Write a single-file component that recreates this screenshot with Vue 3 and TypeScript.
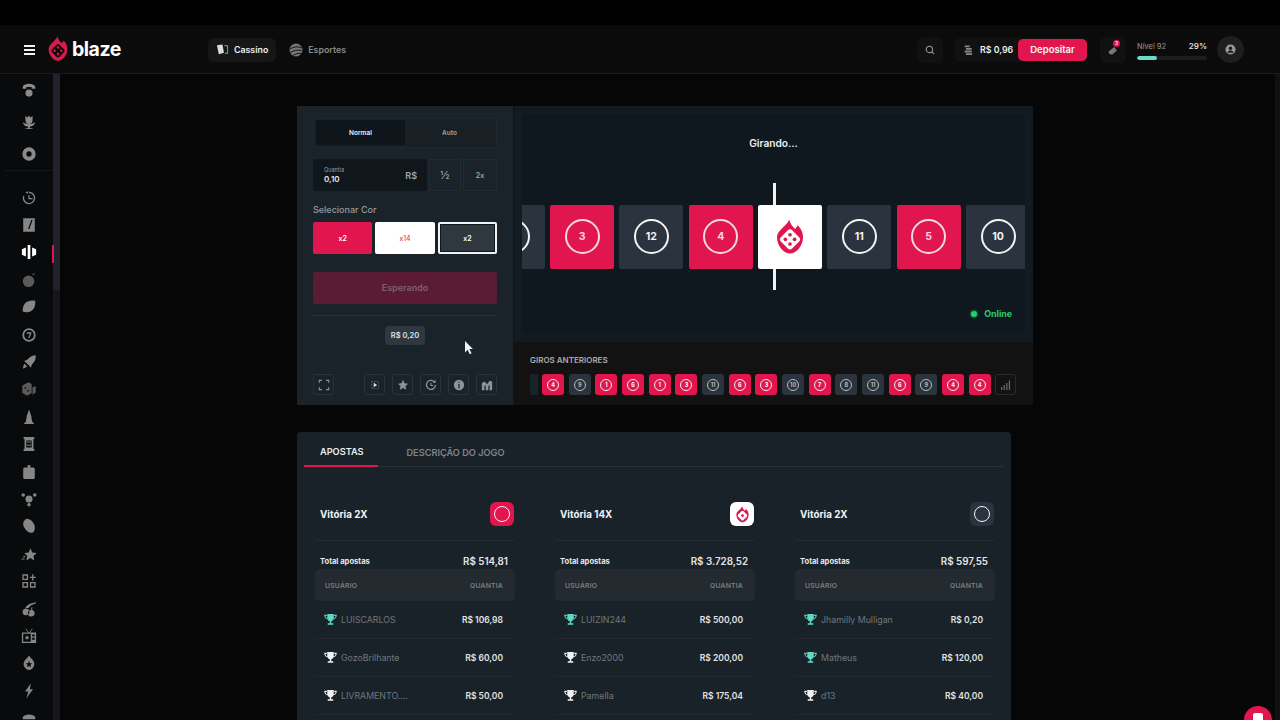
<script setup lang="ts">
const railIcons: string[] = [
  'M2 5c2-4 12-4 14 0v2.500h-4V5.500H6v2H2zM9 8.500a4 4 0 1 1 0 8 4 4 0 0 1 0-8z',
  'M5 2l2 2 2-2 2 2 2-2v5a4 4 0 0 1-8 0zM2 9c1 4 3 5 6 5v2H5v1h8v-1h-3v-2c3 0 5-1 6-5-1 1-3 2-4 2H6c-1 0-3-1-4-2z',
  'M9 1.500a7.500 7.500 0 1 1 0 15 7.500 7.500 0 0 1 0-15zm0 4.500a3 3 0 1 0 0 6 3 3 0 0 0 0-6z',
  'M9 2a7 7 0 1 1-6.500 4.500l1.400.5A5.500 5.500 0 1 0 9 3.500V2zM8.300 5.500h1.400V9H13v1.400H8.300zM5 2.500l3-1v3z',
  'M2.500 1.500h13v15h-13zM11.500 3.500L8 13.500h1.500L13 3.500z',
  'M7.500 1h3v16h-3zM5.500 4v10L1 12V6zM12.500 4l4.500 2v6l-4.500 2z',
  'M8.500 4a6.500 6.500 0 1 1 0 13 6.500 6.500 0 0 1 0-13zM12.500 3l2-2 1 1-2 2z',
  'M16 2c.5 5-1 11-7 12.500-2.500.6-5 .6-7-.5-.5-4 1-9 5-11 3-1.300 6-1.500 9-1z',
  'M9 1.500a7.500 7.500 0 1 1 0 15 7.500 7.500 0 0 1 0-15zm0 2a5.500 5.500 0 1 0 0 11 5.500 5.500 0 0 0 0-11zM6.500 6h5v1.500L9.500 12.500H8l2-5H6.500z',
  'M16.500 1.500c.5 4-1 7.500-4 10L11 15.500l-2-2.500-3-3-2.500-2 3.500-1.500c3-3.500 6.500-5 9.500-5zM4 11l3 3-4.500 2.500c-.5-2 .5-4 1.500-5.500z',
  'M1.500 5l7-3.500 3.500 2v10l-5 3-5.500-3zM4 7v1.700h1.700V7zM7 10v1.700h1.700V10zM13 7l3.500-1v7l-3.500 2.500z',
  'M9 .5l2.500 7.500 1 6 2.500 3H3l2.500-3 1-6z',
  'M3 1h12v2.500h-1v11h1V17H3v-2.500h1v-11H3zM6 5v8h6V5zM7 6h1.500v1.700H7zM9.500 6H11v1.700H9.500zM7 9.500h1.500v1.700H7zM9.500 9.500H11v1.700H9.500z',
  'M7.500 1h3v3h3.500l1.500 1v11l-1 1h-11l-1-1V5L4 4h3.500z',
  'M9 5a4 4 0 1 1 0 8 4 4 0 0 1 0-8zM2.500 2.500a2 2 0 1 1 0 4 2 2 0 0 1 0-4zM15.500 2.500a2 2 0 1 1 0 4 2 2 0 0 1 0-4zM9 13.500a2 2 0 1 1 0 4 2 2 0 0 1 0-4z',
  'M6 1c3-.5 7 2 9 6.500 1.200 3.500.5 7.500-2 9-3 1-7.500-1.500-9.500-6C1.500 7 2.500 2.500 6 1z',
  'M10.500 2.500l2.200 4.800 5 .6-3.700 3.300 1 5-4.500-2.700-4.500 2.700 1-5L3.800 7.900l5-.6zM.5 14h3.500v1.300H.5zM2.500 11.300h2.200v1.300H2.500z',
  'M1.500 1.500h6.500v6.500H1.500zM3 3v3.500h3.500V3zM1.500 10h6.500v6.500H1.500zM3 11.500V15h3.500v-3.500zM10 10h6.500v6.500H10zM11.500 11.500V15H15v-3.500zM12.500 1.500H14v2.700h2.500v1.500H14v2.800h-1.500V5.700H10V4.200h2.500z',
  'M5 8.500a3.800 3.800 0 1 1 0 7.500 3.800 3.800 0 0 1 0-7.500zM11 10a3.800 3.800 0 1 1 0 7.500 3.800 3.800 0 0 1 0-7.500zM5 8c1-3 5-5.500 11.500-6.500l.5 1c-4 1-7.500 3.500-8.500 5.500zM11 10l1-3 1 .5-1 3z',
  'M1 5h16v12H1zM2.500 6.500v9H11v-9zM12.500 7.200v2.300H15.500V7.200zM12.500 11v2.300H15.500V11zM5.500.5l3.500 4.500h-1L5 1zM12.500.5L9.500 5h1L13 1zM6.800 8l.8 1.800 1.900.2-1.400 1.300.4 1.900-1.700-1-1.700 1 .4-1.900L4.100 10l1.900-.2z',
  'M9 .5c1 2 2 2.500 3.500 4.200 3 3 3 6.300 1.500 8.800-1.200 2-3 3.500-5 3.500s-3.800-1.500-5-3.500c-1.500-2.500-1.500-5.800 1.500-8.800C6.900 3 8 2.500 9 .5zM9 6.500l-1 2.700-2.700.2 2.100 1.700-.7 2.600L9 12.300l2.300 1.400-.7-2.600 2.100-1.700-2.700-.2z',
  'M11 .5L4.500 9.500h3.800L6 17.500l7.500-10.500H10z',
  'M2 8c2-4 12-4 14 0v2H2zM2 11h14v5H2z'
]

const reel = [
  { t: 'dark', n: '' }, { t: 'red', n: '3' }, { t: 'dark', n: '12' }, { t: 'red', n: '4' },
  { t: 'white', n: '' }, { t: 'dark', n: '11' }, { t: 'red', n: '5' }, { t: 'dark', n: '10' }
]

const history: [string, string][] = [
  ['red', '4'], ['dark', '9'], ['red', '1'], ['red', '6'], ['red', '1'], ['red', '3'],
  ['dark', '11'], ['red', '6'], ['red', '3'], ['dark', '10'], ['red', '7'], ['dark', '8'],
  ['dark', '11'], ['red', '6'], ['dark', '9'], ['red', '4'], ['red', '4']
]

const columns = [
  {
    title: 'Vitória 2X', kind: 'red', total: 'R$ 514,81',
    rows: [['LUISCARLOS', 'R$ 106,98', 'teal'], ['GozoBrilhante', 'R$ 60,00', 'white'], ['LIVRAMENTO....', 'R$ 50,00', 'white']]
  },
  {
    title: 'Vitória 14X', kind: 'white', total: 'R$ 3.728,52',
    rows: [['LUIZIN244', 'R$ 500,00', 'teal'], ['Enzo2000', 'R$ 200,00', 'white'], ['Pamella', 'R$ 175,04', 'white']]
  },
  {
    title: 'Vitória 2X', kind: 'dark', total: 'R$ 597,55',
    rows: [['Jhamilly Mulligan', 'R$ 0,20', 'teal'], ['Matheus', 'R$ 120,00', 'teal'], ['d13', 'R$ 40,00', 'white']]
  }
]

const flame = 'M11.500 1c.8 3 2.500 5 4 6l1.500-2.500c2 2 3.500 4.500 3.500 8 0 5.500-4.500 10.500-8.500 10.500S3.500 18 3.500 12.500C3.500 8 9 6 11.500 1z'
</script>

<template>
  <div class="page">
    <div class="strip"></div>
    <header class="topbar">
      <div class="burger"><i></i><i></i><i></i></div>
      <div class="logo">
        <svg class="logo-mark" viewBox="3 .5 18 23.500">
          <path :d="flame" fill="#d81a4c" />
          <rect x="7.200" y="9" width="9.600" height="9.600" rx="2" transform="rotate(45 12 13.800)" fill="#14070b" />
          <circle cx="12" cy="10.800" r="1.100" fill="#d81a4c" /><circle cx="9" cy="13.800" r="1.100" fill="#d81a4c" />
          <circle cx="15" cy="13.800" r="1.100" fill="#d81a4c" /><circle cx="12" cy="16.800" r="1.100" fill="#d81a4c" />
        </svg>
        <span>blaze</span>
      </div>
      <nav class="nav">
        <div class="nav-item active">
          <svg viewBox="0 0 14 14" class="nav-icon"><path d="M1 2.500l6-1 1.500 9-5.500 1.500z" fill="#ddd" /><path d="M9 2.500h4v9H9.500v-1H12v-7H9z" fill="#999" /></svg>
          Cassino
        </div>
        <div class="nav-item">
          <svg viewBox="0 0 14 14" class="nav-icon big"><circle cx="7" cy="7" r="6.500" fill="#777" /><path d="M1 6c3-2 8-3 12-1M1.500 9.500c3-2 7-3 11-2M4 12.500c2-1.500 5-2.500 8-2" stroke="#111" stroke-width="1" fill="none" /></svg>
          Esportes
        </div>
      </nav>
      <div class="top-right">
        <div class="icon-box">
          <svg viewBox="0 0 12 12" class="search"><circle cx="5.300" cy="5.300" r="3.800" fill="none" stroke="#999" stroke-width="1.300" /><path d="M8.200 8.200l2.800 2.800" stroke="#999" stroke-width="1.300" /></svg>
        </div>
        <div class="wallet">
          <svg viewBox="0 0 12 14" class="coins"><path d="M2 1.500h6v2.200H2zM3.500 4.600h7v2.200h-7zM2 7.700h8.500v2.200H2zM3.500 10.800h7.500V13H3.500z" fill="#888" /></svg>
          <span class="balance">R$ 0,96</span>
          <button class="deposit">Depositar</button>
        </div>
        <div class="icon-box bell">
          <svg viewBox="0 0 14 14" class="bell-icon"><path d="M2 8.500L8.500 3.500l3 4-5.500 5-3.500-1z" fill="#777" /></svg>
          <span class="badge">3</span>
        </div>
        <div class="level">
          <div class="level-text"><span class="lv">Nível 92</span><span class="pc">29%</span></div>
          <div class="track"><div class="fill" :style="{ width: '29%' }"></div></div>
        </div>
        <div class="avatar">
          <svg viewBox="0 0 12 12"><circle cx="6" cy="6" r="5.500" fill="#999" /><circle cx="6" cy="4.600" r="1.900" fill="#1d1d1d" /><path d="M2.500 9.500c.8-2 2-2.400 3.500-2.400s2.700.4 3.500 2.400z" fill="#1d1d1d" /></svg>
        </div>
      </div>
    </header>

    <div class="body">
      <aside class="side">
        <div class="side-top">
          <svg v-for="i in [0, 1, 2]" :key="i" viewBox="0 0 18 18" class="s-icon"><path :d="railIcons[i]" fill="#8b8b8b" fill-rule="evenodd" /></svg>
        </div>
        <div class="side-rest">
          <svg
            v-for="(d, i) in railIcons.slice(3)"
            :key="i"
            viewBox="0 0 18 18"
            class="s-icon"
          ><path :d="d" :fill="i === 2 ? '#fff' : i === 3 || i === 7 ? '#5a5a5a' : '#868686'" fill-rule="evenodd" /></svg>
        </div>
      </aside>
      <div class="rail"><span class="rail-thumb"></span><span class="rail-mark"></span></div>

      <main class="content">
        <section class="game">
          <div class="controls">
            <div class="tabs">
              <div class="tab on">Normal</div>
              <div class="tab">Auto</div>
            </div>
            <div class="amount-row">
              <div class="amount">
                <div><div class="amt-label">Quantia</div><div class="amt-value">0,10</div></div>
                <span class="amt-cur">R$</span>
              </div>
              <div class="mini">½</div>
              <div class="mini wide">2x</div>
            </div>
            <div class="pick-label">Selecionar Cor</div>
            <div class="picks">
              <div class="pick p-red">x2</div>
              <div class="pick p-white">x14</div>
              <div class="pick p-dark">x2</div>
            </div>
            <button class="wait">Esperando</button>
            <div class="hr"></div>
            <div class="chip-wrap"><span class="chip">R$ 0,20</span></div>
            <div class="tools">
              <div class="tool">
                <svg viewBox="0 0 14 14"><path d="M1.500 4.500v-3h3M9.500 1.500h3v3M12.500 9.500v3h-3M4.500 12.500h-3v-3" fill="none" stroke="#8d9499" stroke-width="1.400" /></svg>
              </div>
              <div class="tools-right">
                <div class="tool">
                  <svg viewBox="0 0 14 14"><path d="M3 3h8v8H3z" fill="none" stroke="#555d63" stroke-dasharray="2 1" /><path d="M5.500 4.500l4 2.500-4 2.500z" fill="#ddd" /></svg>
                </div>
                <div class="tool">
                  <svg viewBox="0 0 14 14"><path d="M7 1l1.800 3.900 4.200.5-3.100 2.900.8 4.200L7 10.400l-3.700 2.100.8-4.200L1 5.400l4.200-.5z" fill="#8d9499" /></svg>
                </div>
                <div class="tool">
                  <svg viewBox="0 0 14 14"><path d="M11.500 4A5.300 5.300 0 1 0 12.300 7" fill="none" stroke="#8d9499" stroke-width="1.500" /><path d="M9 4.500h3.500V1z" fill="#8d9499" /><path d="M7 4.500V7.500h2.500" fill="none" stroke="#8d9499" stroke-width="1.200" /></svg>
                </div>
                <div class="tool">
                  <svg viewBox="0 0 14 14"><circle cx="7" cy="7" r="6" fill="#8d9499" /><path d="M6.300 3h1.400v1.400H6.300zM6.300 5.800h1.400V11H6.300z" fill="#1b242b" /></svg>
                </div>
                <div class="tool">
                  <svg viewBox="0 0 14 14"><path d="M1 13V5l3-2 3 3 3-4 3 1v10h-3V7L8.500 8.500V13h-3V8L4 7.500V13z" fill="#8d9499" /></svg>
                </div>
              </div>
            </div>
          </div>

          <div class="stage">
            <div class="canvas">
              <div class="status">Girando...</div>
              <div class="reel-zone">
                <span class="needle"></span>
                <div class="reel">
                  <div v-for="(c, i) in reel" :key="i" class="tile" :class="'t-' + c.t">
                    <svg v-if="c.t === 'white'" viewBox="3 .5 18 23.500" class="tile-logo">
                      <path :d="flame" fill="#e2164f" />
                      <rect x="6.800" y="8.600" width="10.400" height="10.400" rx="2" transform="rotate(45 12 13.800)" fill="#fff" />
                      <circle cx="12" cy="10.800" r="1.200" fill="#e2164f" /><circle cx="9" cy="13.800" r="1.200" fill="#e2164f" />
                      <circle cx="15" cy="13.800" r="1.200" fill="#e2164f" /><circle cx="12" cy="16.800" r="1.200" fill="#e2164f" />
                    </svg>
                    <span v-else class="ring">{{ c.n }}</span>
                  </div>
                </div>
              </div>
              <div class="online"><i></i>Online</div>
            </div>
            <div class="previous">
              <div class="prev-title">GIROS ANTERIORES</div>
              <div class="prev-row">
                <span class="prev-edge"></span>
                <div v-for="(h, i) in history" :key="i" class="hist" :class="'h-' + h[0]"><span>{{ h[1] }}</span></div>
                <div class="stats">
                  <svg viewBox="0 0 12 12"><path d="M1 8h1.300v3H1zM3.600 6h1.300v5H3.600zM6.200 4h1.300v7H6.200zM8.800 1.500h1.300V11H8.800z" fill="#666" /></svg>
                </div>
              </div>
            </div>
          </div>
        </section>

        <section class="bets">
          <div class="bet-tabs">
            <div class="bet-tab on">APOSTAS</div>
            <div class="bet-tab">DESCRIÇÃO DO JOGO</div>
          </div>
          <div class="cols">
            <div v-for="(col, i) in columns" :key="i" class="col">
              <div class="col-head">
                <span class="col-title">{{ col.title }}</span>
                <span class="col-badge" :class="'b-' + col.kind">
                  <svg v-if="col.kind === 'white'" viewBox="3 .5 18 23.500" class="badge-logo">
                    <path :d="flame" fill="#e2164f" />
                    <rect x="6.800" y="8.600" width="10.400" height="10.400" rx="2" transform="rotate(45 12 13.800)" fill="#fff" />
                    <circle cx="12" cy="13.800" r="2" fill="#e2164f" />
                  </svg>
                  <i v-else></i>
                </span>
              </div>
              <div class="col-total"><span class="tl">Total apostas</span><span class="tv">{{ col.total }}</span></div>
              <div class="thead"><span>USUÁRIO</span><span>QUANTIA</span></div>
              <div v-for="(r, j) in col.rows" :key="j" class="row">
                <span class="who">
                  <svg viewBox="0 0 14 14" class="cup">
                    <path d="M3.500 1h7v4.500c0 2-1.500 3.300-2.700 3.500v2H10v1.700H4V11h2.200V9C5 8.800 3.500 7.500 3.500 5.500zM3 2v1.200H1.500c.1 1.300.8 2.200 1.900 2.500l.4 1.100C1.700 6.500.3 5 .2 2zM11 2h2.800c-.1 3-1.500 4.500-3.600 4.800l.4-1.100c1.100-.3 1.800-1.200 1.900-2.500H11z" :fill="r[2] === 'teal' ? '#5fd8c6' : '#f2f2f2'" />
                  </svg>
                  <span class="name">{{ r[0] }}</span>
                </span>
                <span class="money">{{ r[1] }}</span>
              </div>
            </div>
          </div>
        </section>
      </main>
      <div class="right-rail"></div>
    </div>

    <svg class="cursor" viewBox="0 0 10 16"><path d="M1 0v13l3-3 2.500 5 2-1-2.500-4.800H10z" fill="#f4f4f4" /></svg>
    <div class="chat"><span></span></div>
  </div>
</template>

<style>
html, body { margin: 0; background: #060606; overflow: hidden; }
</style>

<style scoped>
* { box-sizing: border-box; }
.page { position: relative; width: 1280px; height: 720px; overflow: hidden; background: #060606; color: #fff; font-family: Inter, "Liberation Sans", sans-serif; }
.strip { height: 25px; background: #000; }
.topbar { height: 49px; display: flex; align-items: center; background: #0b0b0c; border-bottom: 1px solid #1b1b1d; padding: 1px 0 0 24px; }
.burger { width: 11px; display: flex; flex-direction: column; gap: 2.500px; margin-top: 1px; }
.burger i { height: 1.700px; background: #f2f2f2; display: block; }
.logo { display: flex; align-items: center; margin-left: 13px; width: 160px; }
.logo-mark { width: 20px; height: 26px; margin-top: -1px; flex: none; }
.logo span { font-size: 19.500px; font-weight: 700; letter-spacing: -0.500px; margin-left: 4px; line-height: 1; margin-top: 1px; }
.nav { display: flex; align-items: center; gap: 12px; }
.nav-item { height: 24px; display: flex; align-items: center; gap: 5px; font-size: 8.800px; font-weight: 600; color: #8a8a8a; padding: 0 8px; border-radius: 6px; }
.nav-item.active { background: #161617; color: #eee; }
.nav-icon { width: 13px; height: 13px; }
.nav-icon.big { width: 14px; height: 14px; margin-left: -7px; }
.top-right { margin-left: auto; display: flex; align-items: center; margin-right: 36px; }
.icon-box { width: 26px; height: 26px; background: #111112; border-radius: 6px; display: flex; align-items: center; justify-content: center; position: relative; }
.search { width: 10px; height: 10px; }
.wallet { width: 133px; height: 24px; margin-left: 11px; background: #111112; border-radius: 6px; display: flex; align-items: center; padding-left: 9px; }
.coins { width: 10px; height: 12px; }
.balance { font-size: 8.800px; font-weight: 600; color: #eee; margin-left: 7px; white-space: nowrap; width: 38px; }
.deposit { width: 69px; height: 22px; border: 0; border-radius: 5px; background: #e2164f; color: #f5f5f5; font: 600 9.500px Inter, sans-serif; padding: 0; }
.bell { margin-left: 13px; }
.bell-icon { width: 12px; height: 12px; }
.badge { position: absolute; top: 3px; right: 6px; width: 7px; height: 7px; border-radius: 50%; background: #e2164f; font-size: 5px; line-height: 7px; text-align: center; }
.level { width: 70px; margin-left: 11px; }
.level-text { display: flex; justify-content: space-between; align-items: center; height: 13px; }
.lv { font-size: 7.500px; color: #999; }
.pc { font-size: 8px; color: #ddd; font-weight: 600; }
.track { height: 4px; margin-top: 3px; background: #1b1c1d; border-radius: 2px; overflow: hidden; }
.fill { height: 100%; background: #6fd9c8; border-radius: 2px; }
.avatar { width: 27px; height: 27px; border-radius: 50%; margin-left: 10px; background: #1e1e1e; display: flex; align-items: center; justify-content: center; }
.avatar svg { width: 11px; height: 11px; }

.body { display: flex; height: 646px; }
.side { width: 53px; flex: none; background: #090a0b; display: flex; flex-direction: column; align-items: center; overflow: hidden; padding-left: 5px; }
.side-top { display: flex; flex-direction: column; gap: 16px; padding: 8px 0 8px; align-items: center; width: 100%; border-bottom: 1px solid #161618; }
.side-rest { display: flex; flex-direction: column; gap: 11.420px; padding-top: 18.500px; align-items: center; }
.s-icon { width: 16px; height: 16px; flex: none; }
.rail { width: 7px; flex: none; background: #16161d; position: relative; }
.rail-thumb { position: absolute; left: 0; top: 0; width: 100%; height: 216px; background: #22222c; }
.rail-mark { position: absolute; left: -1px; top: 171px; width: 2px; height: 18px; background: #e2164f; }

.content { flex: 1; padding: 32px 0 0 237px; overflow: hidden; }
.game { width: 736px; height: 299px; display: flex; background: #1a2329; }
.controls { width: 217px; flex: none; padding: 12px 16px 0; border-right: 1px solid #0e1418; }
.tabs { height: 30px; display: flex; padding: 1px 2px 2px; background: #182026; border: 1px solid #1f282e; border-radius: 2px; }
.tab { flex: 1; display: flex; align-items: center; justify-content: center; font-size: 6.500px; font-weight: 600; color: #99a0a4; }
.tab.on { background: #0e161b; color: #f0f0f0; }
.amount-row { display: flex; height: 32px; margin-top: 11px; gap: 2px; }
.amount { width: 114px; background: #0f171c; display: flex; align-items: center; justify-content: space-between; padding: 0 10px 0 11px; border-radius: 2px; }
.amt-label { font-size: 5.500px; color: #9aa0a4; line-height: 7px; }
.amt-value { font-size: 8px; font-weight: 600; line-height: 10px; color: #e4e4e4; }
.amt-cur { font-size: 9px; font-weight: 600; color: #a0a6aa; }
.mini { width: 32px; border: 1px solid #222b31; display: flex; align-items: center; justify-content: center; font-size: 11px; color: #a0a6aa; }
.mini.wide { width: 34px; font-size: 7px; font-weight: 600; }
.pick-label { margin-top: 13px; font-size: 9px; font-weight: 500; color: #959b9f; line-height: 11px; }
.picks { display: flex; gap: 3px; margin-top: 7px; }
.pick { width: 59.500px; height: 32px; border-radius: 2px; display: flex; align-items: center; justify-content: center; font-size: 7px; font-weight: 600; }
.p-red { background: #e2164f; }
.p-white { background: #fff; color: #e2164f; font-weight: 400; }
.p-dark { background: #2f373f; border: 2px solid #f2f2f2; box-shadow: inset 0 0 0 1px #10161a; }
.wait { display: block; width: 100%; height: 32px; margin-top: 18px; border: 0; border-radius: 2px; background: #5b1b35; color: #7f5f6c; font: 600 9px Inter, sans-serif; padding: 0 0 2px; }
.hr { height: 1px; background: #2a3238; margin-top: 11px; }
.chip-wrap { display: flex; justify-content: center; margin-top: 10px; height: 20px; }
.chip { width: 40px; height: 19px; border-radius: 4px; background: #2f3841; display: flex; align-items: center; justify-content: center; font-size: 7.500px; font-weight: 600; color: #dde0e2; white-space: nowrap; }
.tools { display: flex; justify-content: space-between; margin-top: 28px; }
.tools-right { display: flex; gap: 7px; }
.tool { width: 21px; height: 21px; border: 1px solid #2a3339; border-radius: 3px; display: flex; align-items: center; justify-content: center; }
.tool svg { width: 12px; height: 12px; }

.stage { flex: 1; display: flex; flex-direction: column; min-width: 0; background: #121b21; }
.canvas { position: relative; height: 219px; margin: 8px 8px 0; background: #0f181e; }
.status { text-align: center; padding-top: 22px; font-size: 10.200px; font-weight: 600; line-height: 14px; color: #eee; }
.reel-zone { position: relative; margin-top: 33px; height: 107px; overflow: hidden; display: flex; align-items: center; }
.needle { position: absolute; left: 251px; top: 0; width: 3px; height: 107px; background: #f2f2f2; }
.reel { position: relative; display: flex; gap: 5.330px; margin-left: -41.300px; }
.tile { width: 64px; height: 64px; flex: none; border-radius: 2px; display: flex; align-items: center; justify-content: center; }
.t-red { background: #e2164f; }
.t-dark { background: #2b343e; }
.t-white { background: #fff; }
.tile-logo { width: 28px; height: 36px; }
.ring { width: 35px; height: 35px; border-radius: 50%; border: 2.500px solid #f4f4f4; display: flex; align-items: center; justify-content: center; font-size: 10.500px; font-weight: 700; color: #f4f4f4; }
.t-red .ring { border-color: #fbd7e1; color: #fbd7e1; }
.online { position: absolute; right: 13px; bottom: 14px; display: flex; align-items: center; gap: 7px; font-size: 8.800px; font-weight: 700; color: #2fcb6f; }
.online i { width: 6px; height: 6px; border-radius: 50%; background: #1fd46c; box-shadow: 0 0 0 1.500px #0f4a2c; }
.previous { flex: 1; margin-top: 9px; background: #121212; padding: 12px 16px 0; }
.prev-title { font-size: 8px; font-weight: 600; line-height: 12px; color: #aaa; }
.prev-row { display: flex; align-items: center; gap: 4.670px; margin-top: 8px; height: 21px; }
.prev-edge { width: 7.500px; height: 21px; background: #182329; flex: none; }
.hist { width: 22px; height: 21px; flex: none; border-radius: 3px; display: flex; align-items: center; justify-content: center; }
.h-red { background: #e2164f; }
.h-dark { background: #2b343e; }
.hist span { width: 12px; height: 12px; border-radius: 50%; border: 1.300px solid #f0f0f0; display: flex; align-items: center; justify-content: center; font-size: 5.500px; font-weight: 700; }
.h-dark span { border-color: #bbb; color: #bbb; }
.stats { width: 21px; height: 21px; flex: none; border: 1px solid #2a2a2a; border-radius: 3px; display: flex; align-items: center; justify-content: center; }
.stats svg { width: 12px; height: 12px; }

.bets { width: 714px; margin-top: 27px; height: 320px; background: #1a2229; border-radius: 4px 4px 0 0; padding: 0 8px 0 7px; }
.bet-tabs { display: flex; height: 35px; border-bottom: 1px solid #2a3238; font-size: 9.200px; font-weight: 600; color: #7d858a; }
.bet-tab { display: flex; align-items: center; padding: 5px 15px 0 16px; margin-bottom: -1px; }
.bet-tab + .bet-tab { padding-left: 28px; }
.bet-tab.on { color: #f0f0f0; border-bottom: 2px solid #e2164f; }
.cols { display: flex; gap: 40px; padding: 35px 0 0 11px; }
.col { width: 200px; flex: none; }
.col-head { display: flex; justify-content: space-between; align-items: center; height: 24px; padding: 0 1px 0 5px; }
.col-title { font-size: 9.800px; font-weight: 700; color: #f2f2f2; }
.col-badge { width: 24px; height: 24px; border-radius: 6px; display: flex; align-items: center; justify-content: center; }
.b-red { background: #e2164f; }
.b-white { background: #fff; }
.b-dark { background: #2b343e; }
.col-badge i { width: 16px; height: 16px; border-radius: 50%; border: 1.500px solid #f4f4f4; }
.badge-logo { width: 13px; height: 17px; }
.col-total { margin-top: 14px; padding: 12px 7px 0 5px; border-top: 1px solid #222b31; display: flex; justify-content: space-between; align-items: center; height: 29px; }
.tl { font-size: 7.600px; font-weight: 700; color: #e8e8e8; }
.tv { font-size: 9.800px; font-weight: 600; color: #e4e4e4; }
.thead { height: 32px; padding: 0 12px 0 10px; background: #232b31; border-radius: 5px; display: flex; justify-content: space-between; align-items: center; font-size: 6.800px; font-weight: 600; color: #777f84; letter-spacing: .2px; }
.row { height: 38px; padding: 0 12px 0 9px; display: flex; justify-content: space-between; align-items: center; border-bottom: 1px solid #222a30; }
.who { display: flex; align-items: center; gap: 4px; }
.cup { width: 13px; height: 13px; }
.name { font-size: 8.800px; color: #6f777c; }
.money { font-size: 8.500px; font-weight: 600; color: #e4e4e4; }
.right-rail { width: 5px; flex: none; background: #111113; }

.cursor { position: absolute; left: 464px; top: 341px; width: 9px; height: 14px; }
.chat { position: absolute; left: 1244px; top: 706px; width: 28px; height: 28px; border-radius: 50%; background: #e2164f; display: flex; justify-content: center; padding-top: 7px; }
.chat span { width: 10px; height: 9px; border-radius: 2px; background: #fff; }
</style>
